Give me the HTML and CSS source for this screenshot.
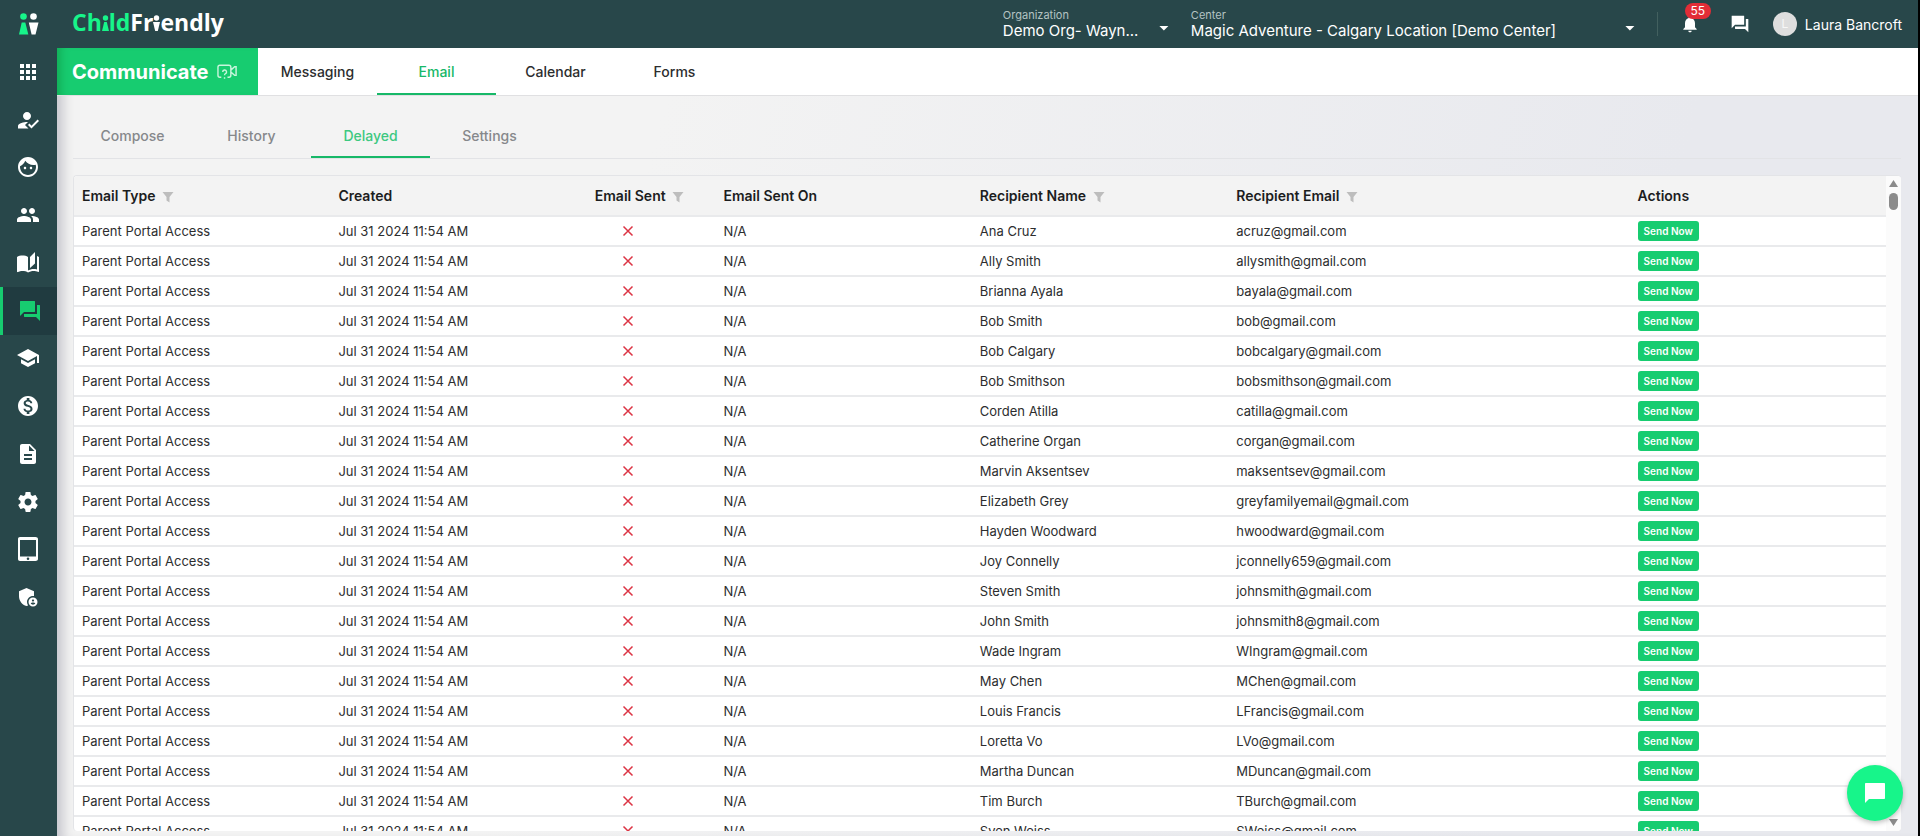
FILE: index.html
```html
<!DOCTYPE html>
<html lang="en">
<head>
<meta charset="utf-8">
<title>ChildFriendly - Delayed Email</title>
<link rel="stylesheet" href="styles.css">
</head>
<body>
<svg class="sprite" aria-hidden="true">
  <symbol id="forum" viewBox="0 0 24 24"><path d="M21.500 6H19v9H6v2.500c0 .3.200.5.500.5H18l4 4V6.500c0-.3-.2-.5-.5-.5zM17 12.500v-10c0-.3-.2-.5-.5-.5h-14c-.3 0-.5.2-.5.500V17l4-4h10.500c.3 0 .5-.2.500-.5z"/></symbol>
  <symbol id="filter" viewBox="0 0 12 12"><path d="M.5 1h11L7.500 6v5.500l-3-2V6z"/></symbol>
  <symbol id="cross" viewBox="0 0 12 12"><path d="M1.500 1.500l9 9M10.500 1.500l-9 9" fill="none" stroke="currentColor" stroke-width="1.500"/></symbol>
</svg>
<div class="app">
  <header class="topbar">
    <a class="mark" href="#" aria-label="Home">
      <svg viewBox="0 0 20 22"><g class="mint"><circle cx="4.500" cy="3.500" r="3.300"/><path d="M2.700 9.500h3.600L9.300 21.500H0z"/></g><circle cx="14.500" cy="3.500" r="3.300"/><path d="M9.800 9.500h9.700L16.500 21.500h-3.900z"/></svg>
    </a>
    <a class="logo" href="#" aria-label="ChildFriendly"><span class="mint">Ch<svg viewBox="0 0 7 18"><circle cx="3.500" cy="5" r="2.700"/><path d="M2.200 9h2.600L7 18H0z"/></svg>ld</span>Fr<svg viewBox="0 0 7 18"><circle cx="3.500" cy="5" r="2.700"/><path d="M0 9h7L4.800 18H2.200z"/></svg>endly</a>
    <div class="picker org"><label for="org">Organization</label><select id="org"><option>Demo Org- Wayn...</option></select></div>
    <div class="picker center"><label for="center">Center</label><select id="center"><option>Magic Adventure - Calgary Location [Demo Center]</option></select></div>
    <button class="icon-btn bell" type="button" aria-label="Notifications"><svg viewBox="0 0 24 24"><path d="M12 22c1.100 0 2-.9 2-2h-4c0 1.100.9 2 2 2zm6-6v-5c0-3.070-1.640-5.640-4.500-6.320V4c0-.83-.67-1.500-1.500-1.500s-1.500.67-1.500 1.500v.68C7.630 5.360 6 7.920 6 11v5l-2 2v1h16v-1z"/></svg><span class="badge">55</span></button>
    <button class="icon-btn" type="button" aria-label="Messages"><svg><use href="#forum"/></svg></button>
    <button class="user" type="button"><span class="avatar">L</span>Laura Bancroft</button>
  </header>
  <nav class="sidebar" aria-label="Main">
    <a href="#" aria-label="Apps"><svg viewBox="0 0 24 24"><path d="M4 8h4V4H4v4zm6 12h4v-4h-4v4zm-6 0h4v-4H4v4zm0-6h4v-4H4v4zm6 0h4v-4h-4v4zm6-10v4h4V4h-4zm-6 4h4V4h-4v4zm6 6h4v-4h-4v4zm0 6h4v-4h-4v4z"/></svg></a>
    <a href="#" aria-label="Attendance"><svg viewBox="0 0 24 24"><path d="M9 17l3-2.940c-.39-.04-.68-.06-1-.06-2.670 0-9 1.340-9 4v2.500h10.500L9 17zM11 12c2.210 0 4-1.790 4-4s-1.790-4-4-4-4 1.790-4 4 1.790 4 4 4zM15.470 20.500L12 17l1.400-1.410 2.070 2.080L21.600 11.500l1.400 1.410z"/></svg></a>
    <a href="#" aria-label="Children"><svg viewBox="0 0 24 24"><path d="M9 11.750c-.69 0-1.250.56-1.250 1.250s.56 1.250 1.250 1.250 1.250-.56 1.250-1.250-.56-1.250-1.250-1.250zm6 0c-.69 0-1.250.56-1.250 1.250s.56 1.250 1.250 1.250 1.250-.56 1.250-1.250-.56-1.250-1.250-1.250zM12 2C6.480 2 2 6.480 2 12s4.480 10 10 10 10-4.480 10-10S17.520 2 12 2zm0 18c-4.410 0-8-3.590-8-8 0-.29.02-.58.05-.86 2.360-1.050 4.230-2.980 5.210-5.370C11.070 8.330 14.050 10 17.420 10c.78 0 1.530-.09 2.250-.26.21.71.33 1.470.33 2.260 0 4.410-3.590 8-8 8z"/></svg></a>
    <a href="#" aria-label="Families"><svg viewBox="0 0 24 24"><path d="M16 11c1.660 0 2.990-1.340 2.990-3S17.660 5 16 5s-3 1.340-3 3 1.340 3 3 3zm-8 0c1.660 0 2.990-1.340 2.990-3S9.660 5 8 5 5 6.340 5 8s1.340 3 3 3zm0 2c-2.330 0-7 1.170-7 3.500V19h14v-2.500c0-2.330-4.670-3.500-7-3.500zm8 0c-.29 0-.62.02-.97.05 1.160.84 1.970 1.970 1.970 3.450V19h6v-2.500c0-2.330-4.670-3.500-7-3.500z"/></svg></a>
    <a href="#" aria-label="Journal"><svg viewBox="0 0 24 24"><path d="M19 1l-5 5v11l5-4.500V1zM1 6v14.650c0 .25.25.5.5.5.1 0 .15-.05.25-.05C3.100 20.450 5.050 20 6.500 20c1.950 0 4.050.4 5.500 1.500V6c-1.450-1.100-3.550-1.500-5.500-1.500S2.450 4.900 1 6zm22 13.500V6c-.6-.45-1.250-.75-2-1v13.500c-1.100-.35-2.300-.5-3.500-.5-1.700 0-4.150.65-5.500 1.500v2c1.350-.85 3.800-1.500 5.500-1.500 1.650 0 3.350.3 4.750 1.050.1.05.15.05.25.05.25 0 .5-.25.5-.5z"/></svg></a>
    <a href="#" class="active" aria-label="Communicate" aria-current="page"><svg><use href="#forum"/></svg></a>
    <a href="#" aria-label="Learning"><svg viewBox="0 0 24 24"><path d="M5 13.180v4L12 21l7-3.820v-4L12 17l-7-3.820zM12 3L1 9l11 6 9-4.910V17h2V9L12 3z"/></svg></a>
    <a href="#" aria-label="Billing"><svg viewBox="0 0 24 24"><path d="M12 2C6.480 2 2 6.480 2 12s4.480 10 10 10 10-4.480 10-10S17.520 2 12 2zm1.410 16.090V20h-2.670v-1.930c-1.710-.36-3.160-1.460-3.270-3.400h1.960c.1 1.050.82 1.870 2.650 1.870 1.960 0 2.400-.98 2.400-1.590 0-.83-.44-1.610-2.670-2.140-2.480-.6-4.180-1.620-4.180-3.670 0-1.720 1.390-2.840 3.110-3.210V4h2.670v1.950c1.860.45 2.790 1.860 2.850 3.390H14.300c-.05-1.110-.64-1.870-2.220-1.870-1.500 0-2.400.68-2.400 1.640 0 .84.65 1.390 2.670 1.910s4.180 1.390 4.180 3.910c-.01 1.830-1.380 2.830-3.120 3.160z"/></svg></a>
    <a href="#" aria-label="Reports"><svg viewBox="0 0 24 24"><path d="M14 2H6c-1.100 0-2 .9-2 2v16c0 1.100.9 2 2 2h12c1.100 0 2-.9 2-2V8l-6-6zm2 16H8v-2h8v2zm0-4H8v-2h8v2zm-3-5V3.500L18.500 9H13z"/></svg></a>
    <a href="#" aria-label="Settings"><svg viewBox="0 0 24 24"><path d="M19.430 12.980c.04-.32.07-.64.07-.98s-.03-.66-.07-.98l2.110-1.650c.19-.15.24-.42.12-.64l-2-3.460c-.12-.22-.39-.3-.61-.22l-2.490 1c-.52-.4-1.080-.73-1.690-.98l-.38-2.650C14.460 2.180 14.250 2 14 2h-4c-.25 0-.46.18-.49.42l-.38 2.650c-.61.25-1.170.59-1.690.98l-2.490-1c-.23-.09-.49 0-.61.22l-2 3.460c-.13.22-.07.49.12.64l2.110 1.650c-.04.32-.07.65-.07.98s.03.66.07.98l-2.110 1.650c-.19.15-.24.42-.12.64l2 3.460c.12.22.39.3.61.22l2.490-1c.52.4 1.080.73 1.690.98l.38 2.650c.03.24.24.42.49.42h4c.25 0 .46-.18.49-.42l.38-2.650c.61-.25 1.170-.59 1.690-.98l2.490 1c.23.09.49 0 .61-.22l2-3.460c.12-.22.07-.49-.12-.64l-2.110-1.650zM12 15.500c-1.930 0-3.500-1.570-3.500-3.500s1.570-3.500 3.500-3.500 3.500 1.570 3.500 3.500-1.570 3.500-3.500 3.500z"/></svg></a>
    <a href="#" aria-label="Tablet"><svg viewBox="0 0 24 24"><path fill-rule="evenodd" d="M4 0h15.500C20.900 0 22 .9 22 2v20c0 1.100-1.100 2-2.500 2H4c-1.200 0-2-.9-2-2V2c0-1.100.8-2 2-2zM4 3v16.500h16V3zM12 20.400a1.300 1.300 0 1 0 0 2.600 1.300 1.300 0 0 0 0-2.600z"/></svg></a>
    <a href="#" aria-label="Administration"><svg viewBox="0 0 24 24"><path d="M17 11c.34 0 .67.04 1 .09V6.270L10.500 3 3 6.270v4.910c0 4.540 3.200 8.790 7.500 9.820.55-.13 1.080-.32 1.600-.55-.69-.98-1.100-2.170-1.100-3.450 0-3.310 2.690-6 6-6zM17 12.500a4.500 4.500 0 1 0 0 9 4.500 4.500 0 0 0 0-9zm0 1.880c.62 0 1.120.51 1.120 1.120s-.51 1.120-1.120 1.120-1.120-.51-1.120-1.120.5-1.120 1.120-1.120zm0 5.370c-.93 0-1.740-.46-2.240-1.170.05-.72 1.510-1.080 2.240-1.080s2.190.36 2.240 1.080c-.5.71-1.310 1.170-2.240 1.170z"/></svg></a>
  </nav>
  <main class="main">
    <div class="section-bar">
      <h1>Communicate <svg viewBox="0 0 22 16" aria-hidden="true"><path d="M4.500 13.500H3a2 2 0 0 1-2-2V3a2 2 0 0 1 2-2h9.500a2 2 0 0 1 2 2v8.500a2 2 0 0 1-2 2H11M14.500 6l4-3.500h1.500v9h-1.500l-4-3.500M6 8a2 2 0 1 1 2.800 1.800q-.9.500-.9 1.600M7.900 13.500v1.500"/></svg></h1>
      <nav class="tabs" aria-label="Communicate"><a href="#">Messaging</a><a href="#" class="on">Email</a><a href="#">Calendar</a><a href="#">Forms</a></nav>
    </div>
    <div class="content">
      <nav class="tabs sub" aria-label="Email"><a href="#">Compose</a><a href="#">History</a><a href="#" class="on">Delayed</a><a href="#">Settings</a></nav>
      <section class="panel">
        <div class="rows">
          <table>
            <colgroup><col class="wide"><col class="wide"><col class="narrow"><col class="wide"><col class="wide"><col><col class="wide"></colgroup>
            <thead><tr><th>Email Type <svg><use href="#filter"/></svg></th><th>Created</th><th>Email Sent <svg><use href="#filter"/></svg></th><th>Email Sent On</th><th>Recipient Name <svg><use href="#filter"/></svg></th><th>Recipient Email <svg><use href="#filter"/></svg></th><th>Actions</th></tr></thead>
            <tbody>
              <tr><td>Parent Portal Access</td><td>Jul 31 2024 11:54 AM</td><td class="no"><svg role="img" aria-label="No"><use href="#cross"/></svg></td><td>N/A</td><td>Ana Cruz</td><td>acruz@gmail.com</td><td><button type="button">Send Now</button></td></tr>
              <tr><td>Parent Portal Access</td><td>Jul 31 2024 11:54 AM</td><td class="no"><svg role="img" aria-label="No"><use href="#cross"/></svg></td><td>N/A</td><td>Ally Smith</td><td>allysmith@gmail.com</td><td><button type="button">Send Now</button></td></tr>
              <tr><td>Parent Portal Access</td><td>Jul 31 2024 11:54 AM</td><td class="no"><svg role="img" aria-label="No"><use href="#cross"/></svg></td><td>N/A</td><td>Brianna Ayala</td><td>bayala@gmail.com</td><td><button type="button">Send Now</button></td></tr>
              <tr><td>Parent Portal Access</td><td>Jul 31 2024 11:54 AM</td><td class="no"><svg role="img" aria-label="No"><use href="#cross"/></svg></td><td>N/A</td><td>Bob Smith</td><td>bob@gmail.com</td><td><button type="button">Send Now</button></td></tr>
              <tr><td>Parent Portal Access</td><td>Jul 31 2024 11:54 AM</td><td class="no"><svg role="img" aria-label="No"><use href="#cross"/></svg></td><td>N/A</td><td>Bob Calgary</td><td>bobcalgary@gmail.com</td><td><button type="button">Send Now</button></td></tr>
              <tr><td>Parent Portal Access</td><td>Jul 31 2024 11:54 AM</td><td class="no"><svg role="img" aria-label="No"><use href="#cross"/></svg></td><td>N/A</td><td>Bob Smithson</td><td>bobsmithson@gmail.com</td><td><button type="button">Send Now</button></td></tr>
              <tr><td>Parent Portal Access</td><td>Jul 31 2024 11:54 AM</td><td class="no"><svg role="img" aria-label="No"><use href="#cross"/></svg></td><td>N/A</td><td>Corden Atilla</td><td>catilla@gmail.com</td><td><button type="button">Send Now</button></td></tr>
              <tr><td>Parent Portal Access</td><td>Jul 31 2024 11:54 AM</td><td class="no"><svg role="img" aria-label="No"><use href="#cross"/></svg></td><td>N/A</td><td>Catherine Organ</td><td>corgan@gmail.com</td><td><button type="button">Send Now</button></td></tr>
              <tr><td>Parent Portal Access</td><td>Jul 31 2024 11:54 AM</td><td class="no"><svg role="img" aria-label="No"><use href="#cross"/></svg></td><td>N/A</td><td>Marvin Aksentsev</td><td>maksentsev@gmail.com</td><td><button type="button">Send Now</button></td></tr>
              <tr><td>Parent Portal Access</td><td>Jul 31 2024 11:54 AM</td><td class="no"><svg role="img" aria-label="No"><use href="#cross"/></svg></td><td>N/A</td><td>Elizabeth Grey</td><td>greyfamilyemail@gmail.com</td><td><button type="button">Send Now</button></td></tr>
              <tr><td>Parent Portal Access</td><td>Jul 31 2024 11:54 AM</td><td class="no"><svg role="img" aria-label="No"><use href="#cross"/></svg></td><td>N/A</td><td>Hayden Woodward</td><td>hwoodward@gmail.com</td><td><button type="button">Send Now</button></td></tr>
              <tr><td>Parent Portal Access</td><td>Jul 31 2024 11:54 AM</td><td class="no"><svg role="img" aria-label="No"><use href="#cross"/></svg></td><td>N/A</td><td>Joy Connelly</td><td>jconnelly659@gmail.com</td><td><button type="button">Send Now</button></td></tr>
              <tr><td>Parent Portal Access</td><td>Jul 31 2024 11:54 AM</td><td class="no"><svg role="img" aria-label="No"><use href="#cross"/></svg></td><td>N/A</td><td>Steven Smith</td><td>johnsmith@gmail.com</td><td><button type="button">Send Now</button></td></tr>
              <tr><td>Parent Portal Access</td><td>Jul 31 2024 11:54 AM</td><td class="no"><svg role="img" aria-label="No"><use href="#cross"/></svg></td><td>N/A</td><td>John Smith</td><td>johnsmith8@gmail.com</td><td><button type="button">Send Now</button></td></tr>
              <tr><td>Parent Portal Access</td><td>Jul 31 2024 11:54 AM</td><td class="no"><svg role="img" aria-label="No"><use href="#cross"/></svg></td><td>N/A</td><td>Wade Ingram</td><td>WIngram@gmail.com</td><td><button type="button">Send Now</button></td></tr>
              <tr><td>Parent Portal Access</td><td>Jul 31 2024 11:54 AM</td><td class="no"><svg role="img" aria-label="No"><use href="#cross"/></svg></td><td>N/A</td><td>May Chen</td><td>MChen@gmail.com</td><td><button type="button">Send Now</button></td></tr>
              <tr><td>Parent Portal Access</td><td>Jul 31 2024 11:54 AM</td><td class="no"><svg role="img" aria-label="No"><use href="#cross"/></svg></td><td>N/A</td><td>Louis Francis</td><td>LFrancis@gmail.com</td><td><button type="button">Send Now</button></td></tr>
              <tr><td>Parent Portal Access</td><td>Jul 31 2024 11:54 AM</td><td class="no"><svg role="img" aria-label="No"><use href="#cross"/></svg></td><td>N/A</td><td>Loretta Vo</td><td>LVo@gmail.com</td><td><button type="button">Send Now</button></td></tr>
              <tr><td>Parent Portal Access</td><td>Jul 31 2024 11:54 AM</td><td class="no"><svg role="img" aria-label="No"><use href="#cross"/></svg></td><td>N/A</td><td>Martha Duncan</td><td>MDuncan@gmail.com</td><td><button type="button">Send Now</button></td></tr>
              <tr><td>Parent Portal Access</td><td>Jul 31 2024 11:54 AM</td><td class="no"><svg role="img" aria-label="No"><use href="#cross"/></svg></td><td>N/A</td><td>Tim Burch</td><td>TBurch@gmail.com</td><td><button type="button">Send Now</button></td></tr>
              <tr><td>Parent Portal Access</td><td>Jul 31 2024 11:54 AM</td><td class="no"><svg role="img" aria-label="No"><use href="#cross"/></svg></td><td>N/A</td><td>Sven Weiss</td><td>SWeiss@gmail.com</td><td><button type="button">Send Now</button></td></tr>
            </tbody>
          </table>
        </div>
        <div class="scrollbar" aria-hidden="true"><span class="up"></span><span class="thumb"></span><span class="down"></span></div>
      </section>
    </div>
  </main>
  <button class="chat" type="button" aria-label="Open chat"><svg viewBox="0 0 24 24"><path d="M21 2H3c-.6 0-1 .4-1 1v19l4-4h15c.6 0 1-.4 1-1V3c0-.6-.4-1-1-1z"/></svg></button>
</div>
</body>
</html>
```

FILE: styles.css
```css
* { box-sizing: border-box; }
body { margin: 0; padding-right: 2px; background: #000; font-family: Inter, "Liberation Sans", sans-serif; font-size: 14px; color: #2c2d2e; }
a { color: inherit; text-decoration: none; }
button, select { font: inherit; color: inherit; border: 0; background: none; padding: 0; }
svg { fill: currentColor; }
.sprite { display: none; }
.mint { color: #17f58a; }

.app { position: relative; display: grid; grid-template: 48px minmax(0, 1fr) / 57px minmax(0, 1fr); height: 100vh; }

.topbar { grid-column: 1 / -1; display: flex; align-items: center; background: #28474a; color: #fff; padding-right: 16px; }
.mark { width: 57px; display: flex; justify-content: center; }
.mark svg { width: 20px; height: 22px; }
.logo { flex: 1; padding: 0 0 4px 15px; font: 700 23px/32px "Open Sans", sans-serif; }
.logo svg { width: 7px; height: 18px; }
.picker { display: flex; flex-direction: column; }
.picker label { font-size: 11px; line-height: 14px; color: #b4c3c3; }
.picker select { appearance: none; font-size: 15px; line-height: 18px; height: 18px; }
.picker::after { content: ""; align-self: flex-end; height: 5px; width: 10px; margin-top: -14px; margin-bottom: 10px; background: #fff; clip-path: polygon(0 0, 100% 0, 50% 100%); }
.org { width: 166px; margin-right: 22px; }
.center { width: 444px; margin-right: 22px; }
.icon-btn { position: relative; width: 48px; display: flex; justify-content: center; margin-right: 1px; }
.icon-btn svg { width: 20px; height: 20px; }
.bell { width: 66px; margin-right: -7px; border-left: 1px solid #42605f; height: 24px; align-items: center; }
.badge { position: absolute; left: 27px; top: -9px; width: 26px; height: 16px; border-radius: 8px; background: #e22d37; font-size: 12px; line-height: 16px; }
.user { display: flex; align-items: center; gap: 8px; margin-left: 8px; }
.avatar { width: 24px; height: 24px; border-radius: 50%; background: #dedede; color: #f7f7f7; font-size: 12px; line-height: 24px; }

.sidebar { display: grid; grid-template-rows: repeat(12, minmax(0, 48px)); max-height: 573px; background: #28474a; color: #fff; box-shadow: 0 300px #28474a; }
.sidebar a { display: flex; align-items: center; justify-content: center; padding-right: 1px; }
.sidebar svg { width: 24px; height: 24px; }
.sidebar .active { border-left: 3px solid #17cc70; background: #203b40; color: #17cc70; }

.main { display: flex; flex-direction: column; min-height: 0; background: linear-gradient(105deg, #f3f3f3 30%, #e8e9ee 80%); box-shadow: inset 14px 0 12px -8px #00002830; }
.section-bar { display: flex; height: 48px; background: #fff; border-bottom: 1px solid #e0e0e2; }
h1 { display: flex; align-items: center; gap: 8px; width: 201px; margin: 0; padding-left: 15px; background: #17cc70; color: #fff; font-size: 20px; line-height: 24px; font-weight: 700; box-shadow: inset 10px 0 8px -6px #00400038; }
h1 svg { width: 21px; height: 16px; fill: none; stroke: #c8f5dc; stroke-width: 1.5; }
.tabs { display: flex; font-weight: 500; }
.tabs a { width: 119px; display: flex; align-items: center; justify-content: center; padding-top: 2px; border-bottom: 2px solid transparent; }
.tabs .on { color: #17b868; border-color: #17b868; }
.content { flex: 1; display: flex; flex-direction: column; min-height: 0; padding: 16px 17px 5px 16px; }
.sub { height: 47px; border-bottom: 1px solid #e2e3e6; color: #86888b; }
.sub .on { color: #3cc880; }

.panel { flex: 1; min-height: 0; display: flex; margin-top: 16px; border: 1px solid #e3e4e7; border-right: 0; border-bottom: 0; border-radius: 4px; overflow: hidden; background: #fff; }
.rows { flex: 1; overflow-y: auto; scrollbar-width: none; }
table { width: 100%; table-layout: fixed; border-collapse: separate; border-spacing: 0; }
.wide { width: 14.15%; }
.narrow { width: 7.1%; }
th, td { padding: 0 8px; text-align: left; white-space: nowrap; border-bottom: 2px solid #e9eaec; }
th { height: 41px; background: #f3f3f3; font-weight: 600; color: #1c1d1e; }
th svg { width: 12px; height: 12px; margin-left: 3px; color: #bdbdbd; vertical-align: -2px; }
td { height: 30px; font-size: 13px; line-height: 20px; }
.no { padding: 0 54px 0 8px; color: #dc3545; }
.no svg { width: 12px; height: 12px; display: block; margin: 0 auto; }
td button { display: block; height: 20px; padding: 0 6px; border-radius: 3px; background: #17cc70; color: #fff; font-size: 10px; line-height: 20px; font-weight: 600; }

.scrollbar { width: 15px; display: flex; flex-direction: column; align-items: center; padding: 4px 0 5px; background: #fbfbfb; }
.up, .down { width: 9px; height: 7px; background: #8b8b8b; clip-path: polygon(50% 0, 100% 100%, 0 100%); }
.thumb { width: 9px; height: 17px; margin: 6px 0 auto; border-radius: 5px; background: #8b8b8b; }
.down { clip-path: polygon(0 0, 100% 0, 50% 100%); }
.chat { position: absolute; right: 15px; bottom: 15px; width: 56px; height: 56px; border-radius: 50%; background: #17f58a; color: #fff; display: flex; align-items: center; justify-content: center; box-shadow: 0 2px 5px #00000040; }
.chat svg { width: 24px; height: 24px; }
```
